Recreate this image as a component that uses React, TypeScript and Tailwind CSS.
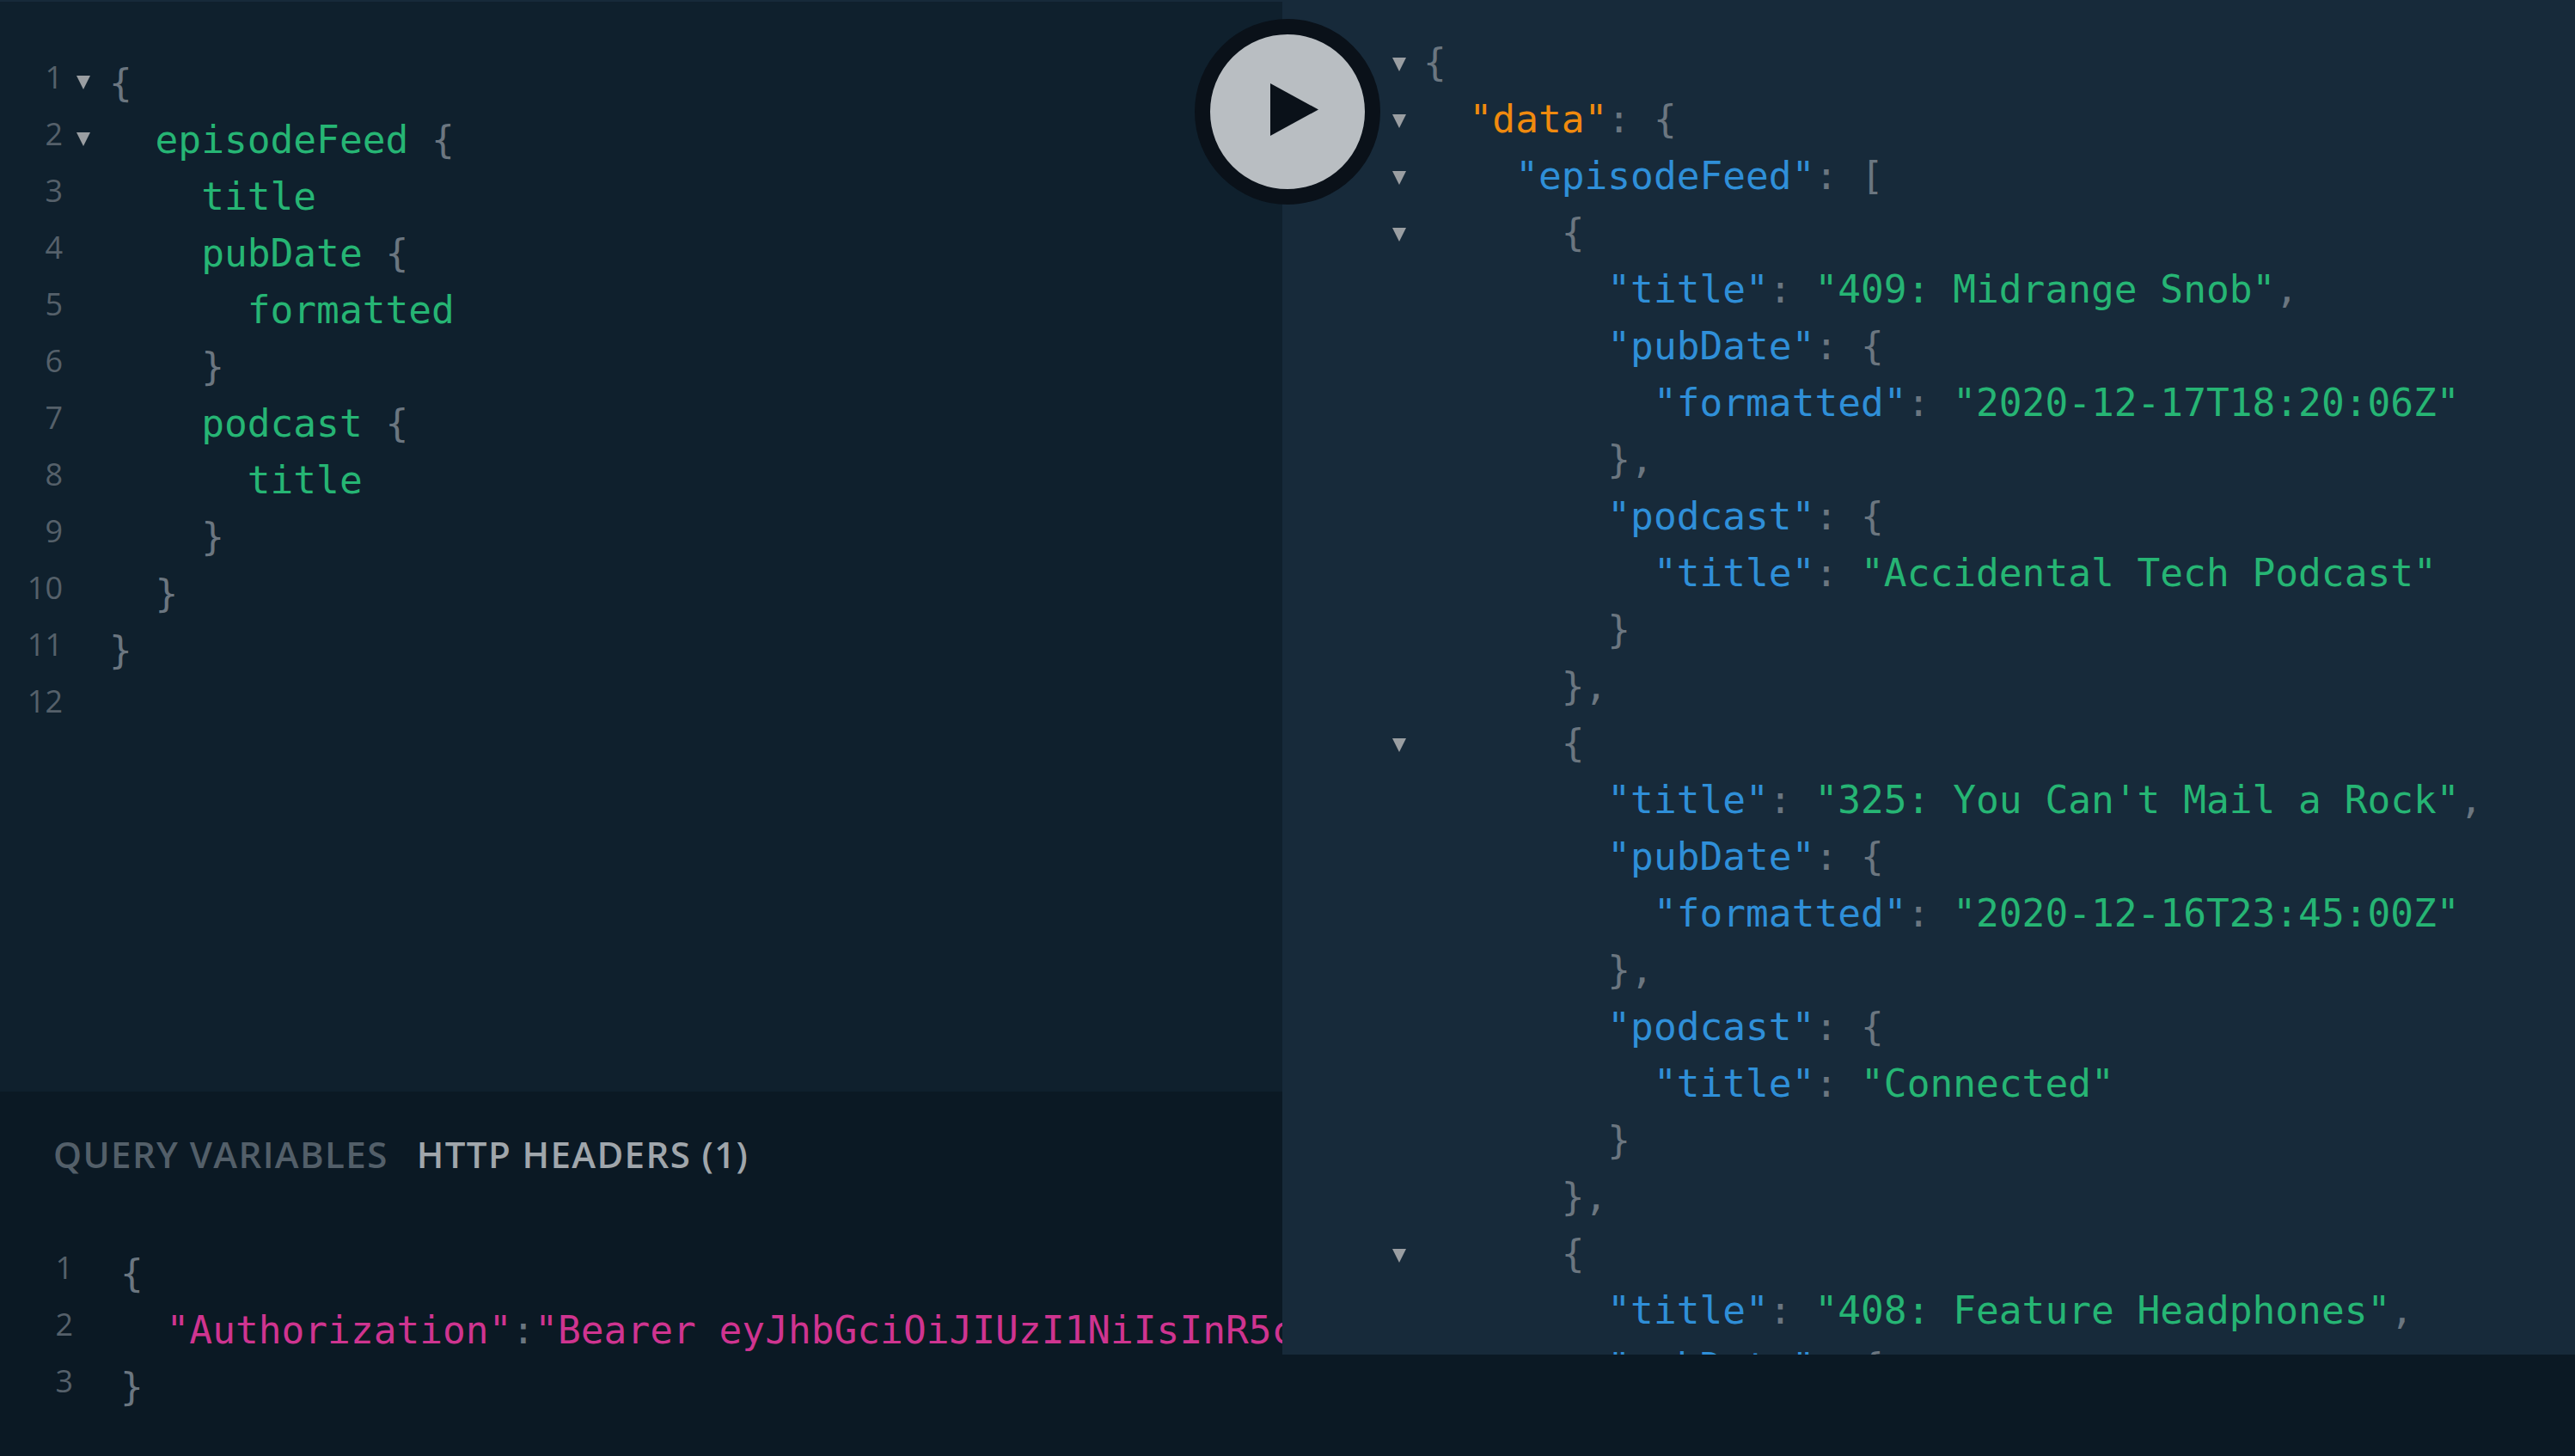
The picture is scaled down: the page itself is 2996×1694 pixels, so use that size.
const mono = "font-['DejaVu_Sans_Mono',monospace]";

type Tok = [string, string];

const G = "text-[#26b574]";
const P = "text-[#6b7680]";
const B = "text-[#2f8fd8]";
const O = "text-[#f08a0e]";
const K = "text-[#cf3490]";

const queryLines: Tok[][] = [
  [["{", P]],
  [["  episodeFeed", G], [" {", P]],
  [["    title", G]],
  [["    pubDate", G], [" {", P]],
  [["      formatted", G]],
  [["    }", P]],
  [["    podcast", G], [" {", P]],
  [["      title", G]],
  [["    }", P]],
  [["  }", P]],
  [["}", P]],
  [],
];

function episode(title: string, date: string, show: string, clip?: boolean): { toks: Tok[]; fold: boolean }[] {
  const rows = [
    { toks: [["      {", P]] as Tok[], fold: true },
    { toks: [['        "title"', B], [": ", P], [title, G], [",", P]] as Tok[], fold: false },
    { toks: [['        "pubDate"', B], [": {", P]] as Tok[], fold: false },
  ];
  if (clip) return rows;
  return rows.concat([
    { toks: [['          "formatted"', B], [": ", P], [date, G]] as Tok[], fold: false },
    { toks: [["        },", P]] as Tok[], fold: false },
    { toks: [['        "podcast"', B], [": {", P]] as Tok[], fold: false },
    { toks: [['          "title"', B], [": ", P], [show, G]] as Tok[], fold: false },
    { toks: [["        }", P]] as Tok[], fold: false },
    { toks: [["      },", P]] as Tok[], fold: false },
  ]);
}

const resultLines = [
  { toks: [["{", P]] as Tok[], fold: true },
  { toks: [['  "data"', O], [": {", P]] as Tok[], fold: true },
  { toks: [['    "episodeFeed"', B], [": [", P]] as Tok[], fold: true },
  ...episode('"409: Midrange Snob"', '"2020-12-17T18:20:06Z"', '"Accidental Tech Podcast"'),
  ...episode('"325: You Can\'t Mail a Rock"', '"2020-12-16T23:45:00Z"', '"Connected"'),
  ...episode('"408: Feature Headphones"', "", "", true),
];

function Fold() {
  return (
    <svg width="16" height="16" viewBox="0 0 16 16" className="block">
      <path d="M0 0H16L8 16Z" fill="#9a9ea2" />
    </svg>
  );
}

function Code({ toks }: { toks: Tok[] }) {
  return (
    <span className={`whitespace-pre text-[44.5px] leading-[66px] ${mono}`}>
      {toks.map((t, i) => (
        <span key={i} className={t[1]}>
          {t[0]}
        </span>
      ))}
    </span>
  );
}

function LineNo({ n, className }: { n: number; className: string }) {
  return (
    <span className={`shrink-0 text-right font-['Open_Sans',sans-serif] text-[36px] leading-[52px] text-[#55606a] ${className}`}>{n}</span>
  );
}

export default function App() {
  return (
    <div className="relative flex h-[1694px] w-[2996px] overflow-hidden bg-[#0b1924]">
      {/* left column */}
      <div className="flex w-[1492px] shrink-0 flex-col">
        <div className="h-[1270px] overflow-hidden border-t-2 border-[#172a3a] bg-[#0f202d] pt-[62px]">
          {queryLines.map((toks, i) => (
            <div key={i} className="flex h-[66px]">
              <LineNo n={i + 1} className="w-[73px]" />
              <div className="w-[54px] shrink-0 pl-[16px] pt-[24px]">{i < 2 && <Fold />}</div>
              <Code toks={toks} />
            </div>
          ))}
        </div>

        <div className="flex-1 overflow-hidden">
          <div className="flex gap-[33px] pl-[62px] pt-[44px] font-['Open_Sans',sans-serif] text-[42px] font-semibold uppercase leading-[58px] tracking-[1.4px]">
            <span className="text-[#535f69]">Query Variables</span>
            <span className="text-[#a0a6ab]">HTTP Headers (1)</span>
          </div>
          <div className="pt-[77px]">
            {[
              [["{", P]] as Tok[],
              [['  "Authorization"', K], [":", P], ['"Bearer eyJhbGciOiJIUzI1NiIsInR5cCI6IkpXVCJ9.eyJ1c2VyIjoiMSJ9"', K]] as Tok[],
              [["}", P]] as Tok[],
            ].map((toks, i) => (
              <div key={i} className="flex h-[66px]">
                <LineNo n={i + 1} className="w-[85px]" />
                <div className="w-[55px] shrink-0" />
                <Code toks={toks} />
              </div>
            ))}
          </div>
        </div>
      </div>

      {/* right column */}
      <div className="min-w-0 flex-1">
        <div className="h-[1576px] overflow-hidden bg-[#172a3a] pt-[40px]">
          {resultLines.map((line, i) => (
            <div key={i} className="flex h-[66px]">
              <div className="w-[164px] shrink-0 pl-[128px] pt-[27px]">{line.fold && <Fold />}</div>
              <Code toks={line.toks} />
            </div>
          ))}
        </div>
      </div>

      {/* run button sits over both panels */}
      <div className="absolute left-[1390px] top-[22px] flex h-[216px] w-[216px] items-center justify-center rounded-full border-[18px] border-[#0a1119] bg-[#b9bec2]">
        <svg width="56" height="61" viewBox="0 0 56 61" className="mb-[5px] ml-[16px] block">
          <path d="M0 0L56 30.5L0 61Z" fill="#0a1119" />
        </svg>
      </div>
    </div>
  );
}
